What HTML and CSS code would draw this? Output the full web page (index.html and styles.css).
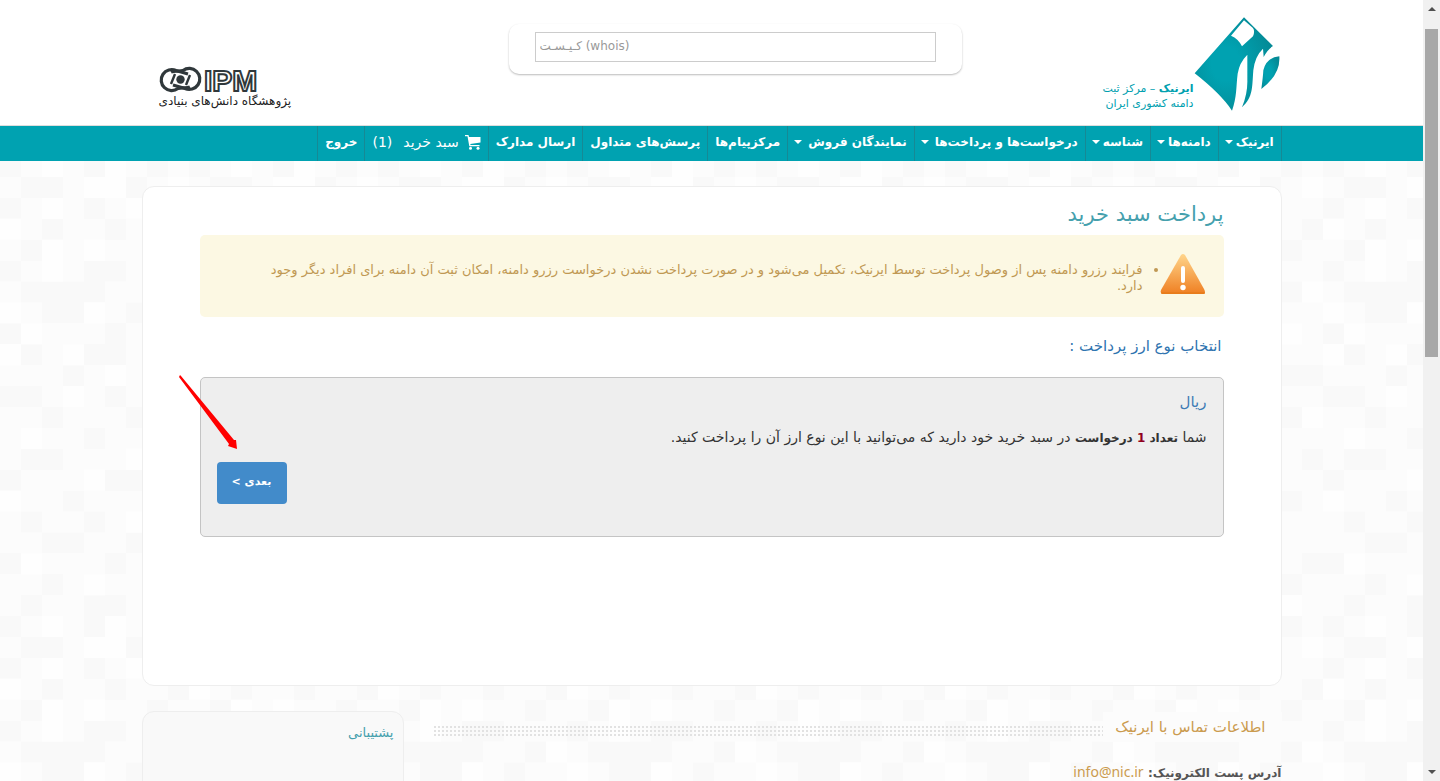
FILE: index.html
```
<!DOCTYPE html>
<html lang="fa" dir="rtl">
<head>
<meta charset="utf-8">
<title>پرداخت سبد خرید</title>
<link rel="stylesheet" href="styles.css">
</head>
<body>
<div class="scrollbar" aria-hidden="true"><i class="arrow up"></i><i class="thumb"></i><i class="arrow down"></i></div>
<div class="page">
  <header class="header">
    <div class="container header-row">
      <a class="brand" href="#">
        <svg class="brand-mark" viewBox="10 10 258 282" aria-hidden="true">
          <defs><radialGradient id="teal" cx="40%" cy="50%" r="60%"><stop offset="0.3" stop-color="#00a2b1"/><stop offset="1" stop-color="#048a96"/></radialGradient></defs>
          <path fill="url(#teal)" d="M160 11 247 97Q231 107 219 130L217 105Q193 127 188 170C184 220 188 250 154 281Q171 240 170 200V123Q146 147 141 180C136 220 139 250 124 291Q90 240 12 179Z"/>
          <path fill="url(#teal)" d="M266 128Q270 182 212 226Q217 190 218 170Q227 132 266 128Z"/>
          <path fill="#fff" d="M160 20 186 42Q194 50 187 68L154 98Q143 75 121 66Z"/>
        </svg>
        <span class="brand-text"><span><b>ایرنیک</b> – مرکز ثبت</span><span>دامنه کشوری ایران</span></span>
      </a>
      <form class="whois">
        <input class="whois-input" type="text" dir="ltr" aria-label="کیست" placeholder="کـیـسـت (whois)">
      </form>
      <a class="institute" href="#">
        <svg class="institute-mark" viewBox="0 0 98 26" aria-hidden="true">
          <g fill="none" stroke="#30383b" stroke-width="3.200">
            <path d="M31 20C27 22 23 20 19 21.500A10.500 10.500 0 1 1 17 3.500L29 7"/>
            <path d="M12 5C16 3 20 5 24 3.500A10.500 10.500 0 1 1 26 21.500L14 18"/>
          </g>
          <path d="M12 17 16 7M27 18 31 8" fill="none" stroke="#30383b" stroke-width="2.400"/>
          <circle cx="21.500" cy="12.500" r="4.200" fill="#30383b"/>
          <text class="institute-name" x="45" y="24">IPM</text>
        </svg>
        <span>پژوهشگاه دانش‌های بنیادی</span>
      </a>
    </div>
  </header>
  <nav class="nav">
    <ul class="container nav-list">
      <li class="drop"><a href="#">ایرنیک<i class="caret"></i></a></li>
      <li class="drop"><a href="#">دامنه‌ها<i class="caret"></i></a></li>
      <li class="drop"><a href="#">شناسه<i class="caret"></i></a></li>
      <li class="drop roomy"><a href="#">درخواست‌ها و پرداخت‌ها<i class="caret"></i></a></li>
      <li class="drop roomy"><a href="#">نمایندگان فروش<i class="caret"></i></a></li>
      <li><a href="#">مرکزپیام‌ها</a></li>
      <li><a href="#">پرسش‌های متداول</a></li>
      <li><a href="#">ارسال مدارک</a></li>
      <li><a class="cart" href="#"><svg class="cart-icon" viewBox="0 0 16 15" aria-hidden="true"><path fill="#fff" d="M0 0H3.500L4 2H15.500V7.500L5.300 9 5.500 10H14.500V11.300H4.300L2.500 1.300H0Z"/><circle cx="5.500" cy="13.200" r="1.500" fill="#fff"/><circle cx="13" cy="13.200" r="1.500" fill="#fff"/></svg><span>سبد خرید</span><span>(1)</span></a></li>
      <li><a href="#">خروج</a></li>
    </ul>
  </nav>
  <main class="container panel">
    <h1 class="title">پرداخت سبد خرید</h1>
    <div class="alert">
      <svg class="alert-icon" viewBox="0 0 46 42" aria-hidden="true">
        <defs><linearGradient id="amber" x1="0" y1="0" x2="0" y2="1"><stop stop-color="#ffd58b"/><stop offset="1" stop-color="#ef7f22"/></linearGradient></defs>
        <path d="M21 2Q23 0 25 2L44 36Q46 40 44 41H2Q0 40 1 37Z" fill="url(#amber)"/>
        <path d="M1 40H45" stroke="#e27814" stroke-width="1"/>
        <path d="M23 15V28" stroke="#fff" stroke-width="4" stroke-linecap="round"/><circle cx="23" cy="34.500" r="2.700" fill="#fff"/>
      </svg>
      <ul class="alert-list"><li>فرایند رزرو دامنه پس از وصول پرداخت توسط ایرنیک، تکمیل می‌شود و در صورت پرداخت نشدن درخواست رزرو دامنه، امکان ثبت آن دامنه برای افراد دیگر وجود دارد.</li></ul>
    </div>
    <h2 class="subtitle">انتخاب نوع ارز پرداخت :</h2>
    <section class="currency">
      <h3 class="currency-name">ریال</h3>
      <p class="currency-text">شما <b>تعداد <span class="count">1</span> درخواست</b> در سبد خرید خود دارید که می‌توانید با این نوع ارز آن را پرداخت کنید.</p>
      <button class="next" type="button">بعدی &gt;</button>
      <svg class="pointer" viewBox="0 0 60 76" aria-hidden="true"><path fill="#f00" d="M0 2 1 0 2 1 55 65 57 65 58 74 49 71 50 69Z"/></svg>
    </section>
  </main>
  <div class="container lower">
    <section class="contact">
      <h2 class="contact-title"><span>اطلاعات تماس با ایرنیک</span></h2>
      <p class="contact-line"><b>آدرس پست الکترونیک:</b> <a href="#">info@nic.ir</a></p>
    </section>
    <aside class="support"><h2>پشتیبانی</h2></aside>
  </div>
</div>
</body>
</html>
```
FILE: styles.css
```
* { box-sizing: border-box; }
body {
  margin: 0;
  height: 100vh;
  overflow: hidden;
  display: flex;
  font-family: "DejaVu Sans", sans-serif;
  font-size: 14px;
  color: #333;
}
h1, h2, h3, p, ul { margin: 0; padding: 0; font-weight: normal; }
a { color: inherit; text-decoration: none; }
.page {
  flex: 1;
  min-width: 0;
  height: 100vh;
  overflow: hidden;
  background-color: #fcfcfc;
  background-size: 189px 460px;
  background-position: 0 177px;
  background-image: url("data:image/svg+xml,%3Csvg xmlns='http://www.w3.org/2000/svg' viewBox='0 0 9 22' preserveAspectRatio='none'%3E%3Cg fill='%23f9f9f9'%3E%3Cpath d='M1 0h2v1h-2zM6 0h1v1h-1zM0 1h1v1h-1zM4 1h1v1h-1zM2 2h1v1h-1zM5 2h1v1h-1zM8 2h1v1h-1zM1 3h1v1h-1zM7 3h1v1h-1zM0 4h1v1h-1zM4 4h2v1h-2zM1 5h4v1h-4zM7 5h1v1h-1zM2 6h2v1h-2zM6 6h1v1h-1zM0 7h1v1h-1zM5 7h1v1h-1zM1 8h1v1h-1zM4 8h2v1h-2zM3 9h1v1h-1zM7 9h2v1h-2zM0 10h2v1h-2zM5 10h1v1h-1zM2 11h1v1h-1zM6 11h2v1h-2zM4 12h1v1h-1zM1 13h2v1h-2zM8 13h1v1h-1zM0 14h1v1h-1zM5 14h2v1h-2zM3 15h1v1h-1zM7 15h1v1h-1zM1 16h1v1h-1zM4 16h1v1h-1zM2 17h2v1h-2zM6 17h1v1h-1zM0 18h1v1h-1zM5 18h1v1h-1zM8 18h1v1h-1zM2 19h1v1h-1zM7 19h1v1h-1zM1 20h1v1h-1zM4 20h2v1h-2zM0 21h1v1h-1zM4 21h1v1h-1zM7 21h1v1h-1z'/%3E%3C/g%3E%3Cg fill='%23fefefe'%3E%3Cpath d='M4 0h2v1h-2zM8 0h1v1h-1zM2 1h1v1h-1zM6 1h1v1h-1zM0 2h1v1h-1zM4 3h1v1h-1zM2 3h1v1h-1zM2 4h1v1h-1zM8 5h1v1h-1zM0 6h1v1h-1zM4 6h1v1h-1zM1 7h1v1h-1zM7 7h1v1h-1zM0 8h1v1h-1zM3 8h1v1h-1zM5 9h1v1h-1zM3 10h1v1h-1zM8 11h1v1h-1zM1 12h1v1h-1zM6 13h1v1h-1zM4 14h1v1h-1zM0 15h1v1h-1zM6 16h1v1h-1zM1 18h1v1h-1zM4 19h1v1h-1zM7 20h1v1h-1zM2 21h1v1h-1zM5 21h1v1h-1z'/%3E%3C/g%3E%3C/svg%3E");
}
.container { width: calc(100% - 16px); max-width: 1140px; margin-inline: auto; }
.header { background: #fff; border-bottom: 1px solid #ddd; }
.header-row {
  display: grid;
  grid-template-columns: 320fr 453px 367fr;
  height: 125px;
}
.brand {
  display: flex;
  align-items: flex-end;
  align-self: start;
  padding: 17px 2px 0 0;
  color: #00a0af;
}
.brand-mark { width: 86px; height: 94px; }
.brand-text { display: grid; font-size: 11px; line-height: 15px; white-space: nowrap; }
.whois {
  align-self: start;
  margin-top: 24px;
  padding: 8px 26px 12px;
  border-radius: 10px;
  background: #fff;
  box-shadow: 0 1px 2px #bbb;
}
.whois-input {
  display: block;
  width: 100%;
  height: 30px;
  padding: 0 4px 2px;
  border: 1px solid #ccc;
  font: 12px "DejaVu Sans", sans-serif;
}
.whois-input::placeholder { color: #999; opacity: 1; }
.institute {
  justify-self: end;
  align-self: start;
  display: flex;
  flex-direction: column;
  align-items: flex-end;
  margin: 67px 0 0 17px;
  color: #222;
  font-size: 12px;
  line-height: 17px;
  white-space: nowrap;
}
.institute-mark { width: 98px; height: 26px; direction: ltr; overflow: visible; }
.institute-name {
  font: bold 30px "Liberation Sans", sans-serif;
  fill: #fff;
  stroke: #30383b;
  stroke-width: 2px;
}
.nav { background: #00a2b1; color: #fff; }
.nav-list { display: flex; list-style: none; font-weight: bold; font-size: 12px; border-right: 1px solid #168995; }
.nav-list li { border-left: 1px solid #168995; }
.nav-list a { display: flex; align-items: center; height: 35px; padding: 0 7px 3px; white-space: nowrap; }
.nav-list .drop a { padding-left: 6px; }
.caret {
  margin-right: 3px;
  border: 4px solid transparent;
  border-top-color: #fff;
  border-bottom: 0;
}
.roomy .caret { margin-right: 6px; }
.nav-list .cart { padding-inline: 7px; font-weight: normal; font-size: 14px; }
.cart span + span { margin-right: 11px; }
.cart-icon { width: 16px; height: 15px; margin-left: 6px; }
.panel {
  min-height: 500px;
  margin-top: 25px;
  padding: 11px 57px;
  border: 1px solid #eee;
  border-radius: 12px;
  background: #fff;
}
.title { color: #45a0ad; font-size: 21px; line-height: 32px; margin-bottom: 5px; }
.alert {
  display: flex;
  min-height: 82px;
  padding: 18px 18px 20px 50px;
  border-radius: 5px;
  background: #fcf8e3;
  color: #c09853;
}
.alert-icon { flex: none; width: 46px; height: 42px; }
.alert-list { padding: 9px 17px 0 0; font-size: 13px; line-height: 16px; }
.subtitle { padding: 17px 2px 19px; color: #2f74b0; font-size: 15px; line-height: 24px; }
.currency {
  position: relative;
  min-height: 160px;
  padding: 12px 16px;
  border: 1px solid #c4c4c4;
  border-radius: 5px;
  background: #eee;
}
.currency-name { color: #3f7cb5; font-size: 15px; line-height: 24px; }
.currency-text { margin-top: 11px; line-height: 24px; }
.currency-text b { font-size: 12px; }
.count { color: #900020; }
.next {
  display: block;
  width: 70px;
  height: 42px;
  margin: 12px auto 0 0;
  padding: 0 0 4px;
  border: 0;
  border-radius: 4px;
  background: #428bca;
  color: #fff;
  font: bold 11px "DejaVu Sans", sans-serif;
}
.pointer { position: absolute; top: -3px; left: -22px; width: 60px; height: 76px; }
.lower { display: flex; gap: 30px; margin-top: 25px; }
.contact { flex: 1; }
.contact-title {
  color: #cb9b4f;
  font-size: 15px;
  line-height: 30px;
  background: url("data:image/svg+xml,%3Csvg xmlns='http://www.w3.org/2000/svg' width='4' height='4'%3E%3Cpath fill='%23e2e2e2' d='M0 0h2v2h-2z'/%3E%3C/svg%3E") 0 0 / 4px 4px content-box;
  padding: 15px 0 21px;
  height: 46px;
}
.contact-title span { display: block; width: fit-content; margin-top: -14px; padding: 0 16px 0 12px; background: #fcfcfc; }
.contact-line { color: #555; line-height: 30px; }
.contact-line b { font-size: 12px; }
.contact-line a { color: #cb9b4f; font-family: "Noto Sans", sans-serif; }
.support {
  width: 262px;
  min-height: 120px;
  padding: 10px 9px;
  border: 1px solid #eee;
  border-radius: 12px;
  background: #f9f9f9;
}
.support h2 { color: #45a0ad; font-size: 13px; line-height: 22px; }
.scrollbar {
  width: 17px;
  display: flex;
  flex-direction: column;
  align-items: center;
  background: #f1f1f1;
}
.arrow { margin: 7px 0; border: 4px solid transparent; }
.up { border-bottom-color: #505050; border-top: 0; }
.down { border-top-color: #505050; border-bottom: 0; margin-top: auto; }
.thumb { width: 13px; height: 42%; margin-top: 11px; background: #a8a8a8; }
```
